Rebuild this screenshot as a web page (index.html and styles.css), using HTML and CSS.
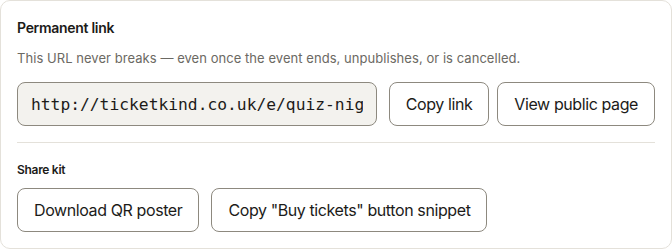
FILE: index.html
```html
<!DOCTYPE html>
<html lang="en">
<head>
<meta charset="utf-8">
<title>Permanent link</title>
<link rel="stylesheet" href="styles.css">
</head>
<body>
<section class="card">
  <h2 class="title">Permanent link</h2>
  <p class="hint">This URL never breaks — even once the event ends, unpublishes, or is cancelled.</p>
  <div class="row link-row">
    <input class="url" type="text" readonly value="http://ticketkind.co.uk/e/quiz-night-at-the-crown">
    <div class="btn-group">
      <button class="btn">Copy link</button>
      <button class="btn">View public page</button>
    </div>
  </div>
  <hr class="divider">
  <h3 class="subtitle">Share kit</h3>
  <div class="row kit-row">
    <button class="btn">Download QR poster</button>
    <button class="btn">Copy "Buy tickets" button snippet</button>
  </div>
</section>
</body>
</html>
```
FILE: styles.css
```css
* { box-sizing: border-box; }
html, body { margin: 0; padding: 0; background: #ffffff; }
body { font-family: Inter, "Liberation Sans", sans-serif; color: #1c1b19; }
.card {
  width: 672px;
  height: 249px;
  border: 1px solid #e4e1da;
  border-radius: 10px;
  background: #fff;
  padding: 17px 16px 16px 16px;
}
.title {
  margin: 0;
  font-size: 14px;
  line-height: 20px;
  font-weight: 600;
  letter-spacing: -0.3px;
}
.hint {
  margin: 11px 0 0 0;
  font-size: 13px;
  line-height: 18px;
  color: #6b6963;
  letter-spacing: 0.05px;
}
.row {
  display: flex;
  gap: 12px;
}
.link-row { margin-top: 15px; }
.btn-group {
  display: flex;
  gap: 8px;
}
.url {
  flex: 1;
  min-width: 0;
  height: 44px;
  padding: 0 13px;
  border: 1px solid #8d897f;
  border-radius: 8px;
  background: #f3f2ee;
  font-family: "DejaVu Sans Mono", "Liberation Mono", monospace;
  font-size: 16.3px;
  color: #1c1b19;
  outline: none;
}
.btn {
  height: 44px;
  padding: 0 16px;
  border: 1px solid #8d897f;
  border-radius: 8px;
  background: #fff;
  font-family: Inter, "Liberation Sans", sans-serif;
  font-size: 16px;
  letter-spacing: -0.4px;
  color: #1c1b19;
  white-space: nowrap;
}
.divider {
  margin: 16px 0 0 0;
  height: 0;
  border: 0;
  border-top: 1px solid #e4e1da;
}
.subtitle {
  margin: 19px 0 0 0;
  font-size: 12px;
  line-height: 16px;
  font-weight: 600;
  letter-spacing: -0.3px;
}
.kit-row { margin-top: 10px; }
```
